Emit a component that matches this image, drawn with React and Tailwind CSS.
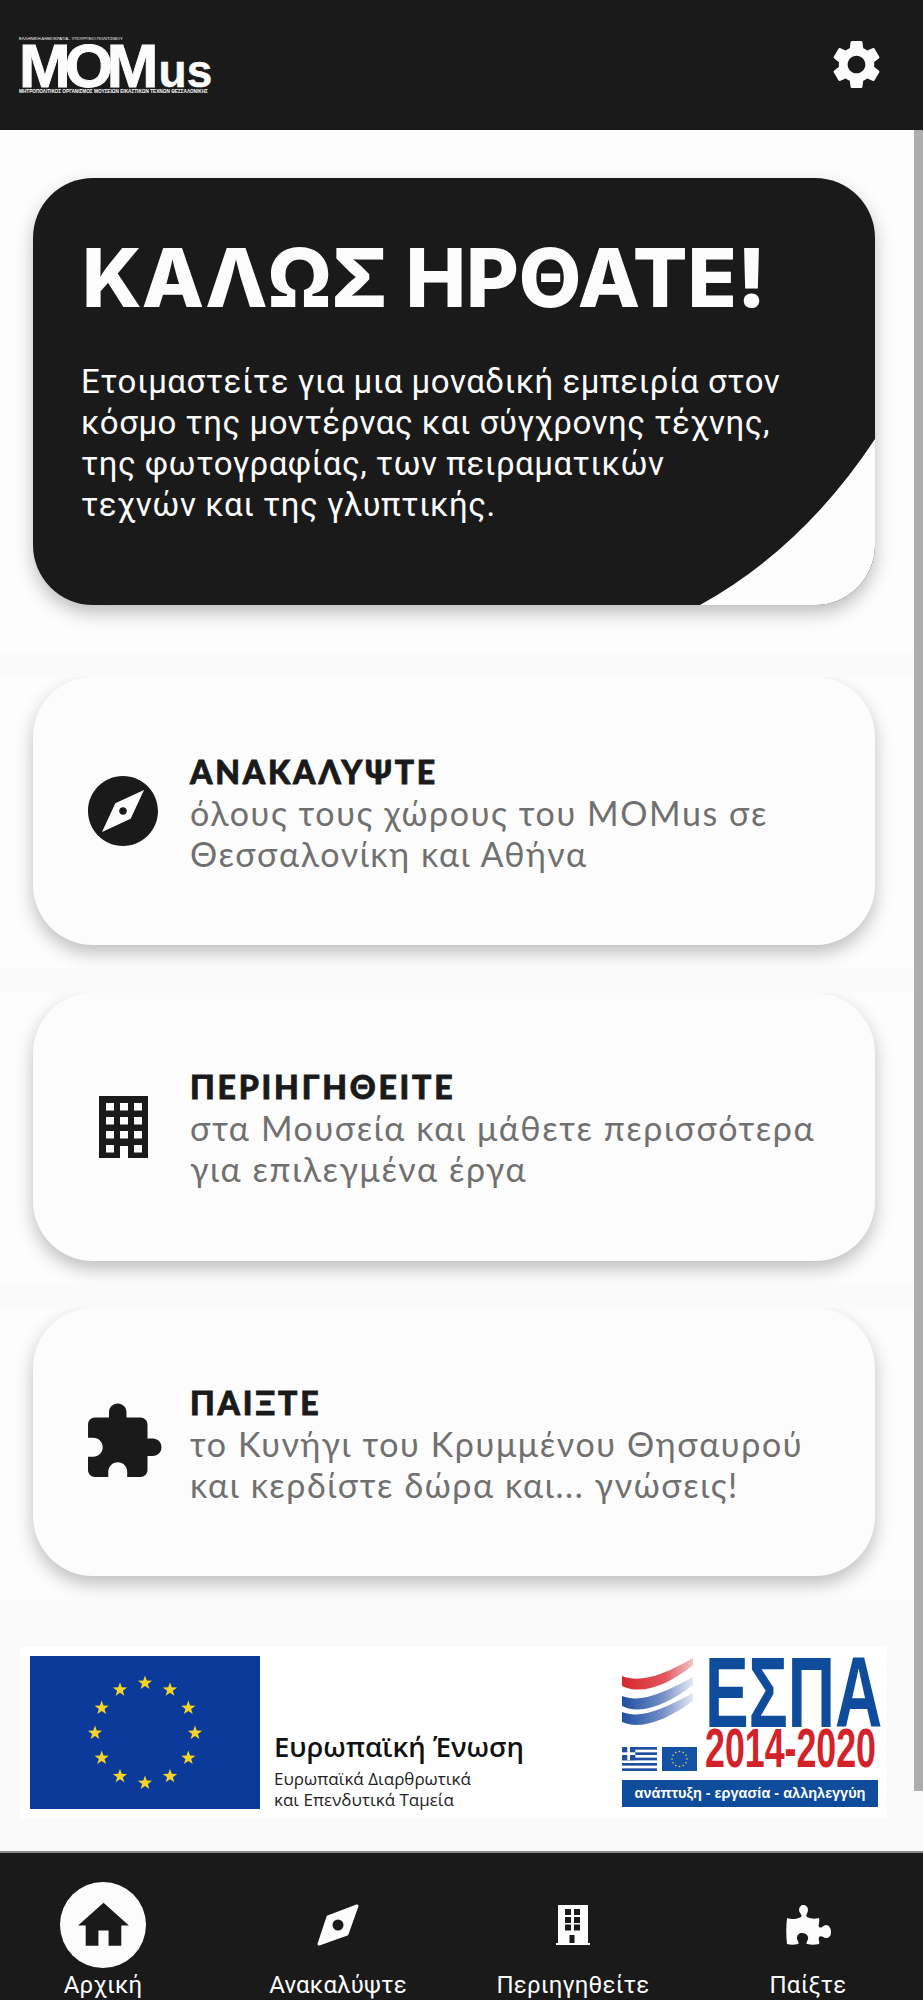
const GEAR = 'M19.14 12.94c.04-.3.06-.61.06-.94 0-.32-.02-.64-.07-.94l2.03-1.58c.18-.14.23-.41.12-.61l-1.92-3.32c-.12-.22-.37-.29-.59-.22l-2.39.96c-.5-.38-1.03-.7-1.62-.94l-.36-2.54c-.04-.24-.24-.41-.48-.41h-3.84c-.24 0-.43.17-.47.41l-.36 2.54c-.59.24-1.13.57-1.62.94l-2.39-.96c-.22-.08-.47 0-.59.22L2.74 8.87c-.12.21-.08.47.12.61l2.03 1.58c-.05.3-.09.63-.09.94s.02.64.07.94l-2.03 1.58c-.18.14-.23.41-.12.61l1.92 3.32c.12.22.37.29.59.22l2.39-.96c.5.38 1.03.7 1.62.94l.36 2.54c.05.24.24.41.48.41h3.84c.24 0 .44-.17.47-.41l.36-2.54c.59-.24 1.13-.56 1.62-.94l2.39.96c.22.08.47 0 .59-.22l1.92-3.32c.12-.22.07-.47-.12-.61l-2.01-1.58zM12 15.6c-1.98 0-3.6-1.62-3.6-3.6s1.62-3.6 3.6-3.6 3.6 1.62 3.6 3.6-1.62 3.6-3.6 3.6z';
const EXPLORE = 'M12 10.9c-.61 0-1.1.49-1.1 1.1s.49 1.1 1.1 1.1c.61 0 1.1-.49 1.1-1.1s-.49-1.1-1.1-1.1zM12 2C6.48 2 2 6.48 2 12s4.48 10 10 10 10-4.48 10-10S17.52 2 12 2zm2.19 12.19L6 18l3.81-8.19L18 6l-3.81 8.19z';
const EXTENSION = 'M20.5 11H19V7c0-1.1-.9-2-2-2h-4V3.5C13 2.12 11.88 1 10.5 1S8 2.12 8 3.5V5H4c-1.1 0-1.99.9-1.99 2v3.8H3.5c1.49 0 2.7 1.21 2.7 2.7s-1.21 2.7-2.7 2.7H2V20c0 1.1.9 2 2 2h3.8v-1.5c0-1.49 1.21-2.7 2.7-2.7 1.49 0 2.7 1.21 2.7 2.7V22H17c1.1 0 2-.9 2-2v-4h1.5c1.38 0 2.5-1.12 2.5-2.5S21.88 11 20.5 11z';
const HOME = 'M10 20v-6h4v6h5v-8h3L12 3 2 12h3v8z';

const MatIcon = ({ d, className }) => (
  <svg viewBox="0 0 24 24" className={className} fill="currentColor"><path d={d} /></svg>
);

const BuildingIcon = () => (
  <svg viewBox="0 0 49 62" className="w-[49px] h-[62px]">
    <path
      fillRule="evenodd"
      fill="#1a1a1a"
      d="M0 0h49v62H29V50h-8v12H0z
         M7 7v7.5h8V7z M21 7v7.5h8V7z M35 7v7.5h8V7z
         M7 21v7.5h8V21z M21 21v7.5h8V21z M35 21v7.5h8V21z
         M7 35v7.5h8V35z M21 35v7.5h8V35z M35 35v7.5h8V35z
         M7 49v7.5h8V49z M35 49v7.5h8V49z"
    />
  </svg>
);

const NavCompass = () => (
  <svg viewBox="0 0 44 44" className="w-[44px] h-[44px]">
    <path d="M41 3 L12 14 L3 41 L31 31 Z" fill="#fcfcfc" stroke="#fcfcfc" strokeWidth="3" strokeLinejoin="round" />
    <circle cx="22" cy="22" r="5.5" fill="#1a1a1a" />
  </svg>
);

const NavBuilding = () => (
  <svg viewBox="0 0 34 40" className="w-[34px] h-[40px]">
    <path
      fillRule="evenodd"
      fill="#fcfcfc"
      d="M2 0h30v38h2v2H0v-2h2z
         M9 4v6h6V4z M18 4v6h6V4z
         M9 12v6h6v-6z M18 12v6h6v-6z
         M9 19.500v6h6v-6z M18 19.500v6h6v-6z
         M13.500 30v8h5v-8z"
    />
  </svg>
);

const NavPuzzle = () => (
  <svg viewBox="0 0 45 40" className="w-[45px] h-[40px]">
    <path
      fill="#fcfcfc"
      d="M1 13 C6 15 11 14 15 12 C17 10 13 8 13 5 C13 2 15 0 17 0 C20 0 22 2 22 5 C22 8 19 10 21 12 C25 14 29 14 33 13 C34 17 32 20 33 22 C36 24 37 20 40 20 C43 20 45 23 45 27 C45 31 43 33 40 33 C37 33 36 30 33 32 C32 35 34 37 33 39 C29 40 25 40 21 39 C19 38 23 35 22 32 C21 29 19 28 16 28 C13 28 11 30 11 33 C11 36 14 38 12 39 C8 40 4 40 1 39 C0 31 0 21 1 13 Z"
    />
  </svg>
);

const Star = ({ cx, cy, r = 7.5 }) => {
  const points = [];
  for (let i = 0; i < 10; i++) {
    const rad = i % 2 === 0 ? r : r * 0.4;
    const a = -Math.PI / 2 + (i * Math.PI) / 5;
    points.push(`${cx + rad * Math.cos(a)},${cy + rad * Math.sin(a)}`);
  }
  return <polygon points={points.join(' ')} fill="#f5d327" />;
};

const EuFlag = () => (
  <svg viewBox="0 0 230 153" className="w-[230px] h-[153px] shrink-0">
    <rect width="230" height="153" fill="#0b3a9b" />
    {Array.from({ length: 12 }).map((_, i) => {
      const a = (i * Math.PI) / 6;
      return <Star key={i} cx={115 + 50 * Math.sin(a)} cy={77 - 50 * Math.cos(a)} />;
    })}
  </svg>
);

const EspaWaves = () => (
  <svg viewBox="0 0 71 68" className="w-[71px] h-[68px] shrink-0">
    <defs>
      <linearGradient id="waveRed" x1="0" x2="1" y1="0" y2="0">
        <stop offset="0" stopColor="#d5282f" />
        <stop offset="0.6" stopColor="#e2555a" />
        <stop offset="1" stopColor="#f2c4c4" />
      </linearGradient>
      <linearGradient id="waveBlue" x1="0" x2="1" y1="0" y2="0">
        <stop offset="0" stopColor="#1f4f9f" />
        <stop offset="0.55" stopColor="#6f8cc4" />
        <stop offset="1" stopColor="#e6e9f4" />
      </linearGradient>
    </defs>
    <path d="M0 18 C18 25 40 18 71 0 L71 7 C48 26 20 38 0 28 Z" fill="url(#waveRed)" />
    <path d="M0 38 C18 45 40 36 71 19 L71 27 C48 45 20 58 0 48 Z" fill="url(#waveBlue)" />
    <path d="M0 54 C18 61 40 52 71 35 L71 43 C48 60 20 73 0 64 Z" fill="url(#waveBlue)" />
  </svg>
);

const GreekFlag = () => (
  <svg viewBox="0 0 35 24" className="w-[35px] h-[24px] shrink-0">
    <rect width="35" height="24" fill="#fff" />
    {[0, 2, 4, 6, 8].map((i) => (
      <rect key={i} y={(i * 24) / 9} width="35" height={24 / 9} fill="#1f4f9f" />
    ))}
    <rect width="13.300" height="13.300" fill="#1f4f9f" />
    <rect x="5.300" width="2.700" height="13.300" fill="#fff" />
    <rect y="5.300" width="13.300" height="2.700" fill="#fff" />
  </svg>
);

const SmallEuFlag = () => (
  <svg viewBox="0 0 35 24" className="w-[35px] h-[24px] shrink-0">
    <rect width="35" height="24" fill="#1450a3" />
    {Array.from({ length: 12 }).map((_, i) => {
      const a = (i * Math.PI) / 6;
      return <circle key={i} cx={17.5 + 7.5 * Math.sin(a)} cy={12 - 7.5 * Math.cos(a)} r="0.8" fill="#e8d84a" />;
    })}
  </svg>
);

const Logo = () => (
  <div className="flex flex-col font-['Liberation_Sans',sans-serif] text-[#fcfcfc] w-[192px]">
    <div className="text-[4.200px] leading-[6px] whitespace-nowrap">ΕΛΛΗΝΙΚΗ ΔΗΜΟΚΡΑΤΙΑ - ΥΠΟΥΡΓΕΙΟ ΠΟΛΙΤΙΣΜΟΥ</div>
    <div className="flex items-baseline h-[43px] leading-[43px] mt-[2px] font-bold">
      <span className="text-[62px] tracking-[-6px] [-webkit-text-stroke:1px_#fcfcfc]">MOM</span>
      <span className="text-[46px] ml-[6px] [-webkit-text-stroke:0.5px_#fcfcfc]">us</span>
    </div>
    <div className="text-[4.700px] leading-[6px] mt-[2px] whitespace-nowrap font-bold">ΜΗΤΡΟΠΟΛΙΤΙΚΟΣ ΟΡΓΑΝΙΣΜΟΣ ΜΟΥΣΕΙΩΝ ΕΙΚΑΣΤΙΚΩΝ ΤΕΧΝΩΝ ΘΕΣΣΑΛΟΝΙΚΗΣ</div>
  </div>
);

const cards = [
  {
    title: 'ΑΝΑΚΑΛΥΨΤΕ',
    lines: ['όλους τους χώρους του MOMus σε', 'Θεσσαλονίκη και Αθήνα'],
    icon: <MatIcon d={EXPLORE} className="w-[84px] h-[84px] text-[#1a1a1a]" />,
  },
  {
    title: 'ΠΕΡΙΗΓΗΘΕΙΤΕ',
    lines: ['στα Μουσεία και μάθετε περισσότερα', 'για επιλεγμένα έργα'],
    icon: <BuildingIcon />,
  },
  {
    title: 'ΠΑΙΞΤΕ',
    lines: ['το Κυνήγι του Κρυμμένου Θησαυρού', 'και κερδίστε δώρα και... γνώσεις!'],
    icon: <MatIcon d={EXTENSION} className="w-[84px] h-[84px] text-[#1a1a1a]" />,
  },
];

const navItems = [
  { label: 'Αρχική', active: true },
  { label: 'Ανακαλύψτε', icon: <NavCompass /> },
  { label: 'Περιηγηθείτε', icon: <NavBuilding /> },
  { label: 'Παίξτε', icon: <NavPuzzle /> },
];

export default function App() {
  return (
    <div className="relative h-[2000px] flex flex-col overflow-hidden bg-[#fafafa] font-['Roboto',sans-serif]">
      <header className="h-[130px] shrink-0 bg-[#1a1a1a] flex items-center justify-between pl-[19px] pr-[37px]">
        <Logo />
        <MatIcon d={GEAR} className="w-[59px] h-[59px] text-[#fcfcfc] -mt-[2px]" />
      </header>

      <main className="flex-1 flex flex-col">
        <section className="pt-[48px] pb-[48px] pl-[33px] pr-[48px] overflow-hidden bg-[#fdfdfd] mb-[24px]">
          <div className="relative h-[427px] rounded-[60px] bg-[#1a1a1a] overflow-hidden shadow-[0_8px_18px_rgba(0,0,0,0.25)] pt-[52px] pl-[49px]">
            <svg viewBox="0 0 842 427" className="absolute inset-0 w-full h-full">
              <path d="M842 261 Q770 370 667 427 L842 427 Z" fill="#fdfdfd" />
            </svg>
            <h1 className="relative font-['Inter',sans-serif] text-[81px] leading-[96px] font-extrabold text-[#fcfcfc] whitespace-nowrap">ΚΑΛΩΣ ΗΡΘΑΤΕ!</h1>
            <p className="relative mt-[35px] -ml-[1px] text-[33px] leading-[41px] tracking-[0.5px] text-[#fcfcfc]">
              Ετοιμαστείτε για μια μοναδική εμπειρία στον<br />
              κόσμο της μοντέρνας και σύγχρονης τέχνης,<br />
              της φωτογραφίας, των πειραματικών<br />
              τεχνών και της γλυπτικής.
            </p>
          </div>
        </section>

        <div className="flex flex-col gap-[24.500px]">
          {cards.map((card) => (
            <section key={card.title} className="pb-[23px] pl-[33px] pr-[48px] overflow-hidden bg-[#fdfdfd]">
              <div className="h-[268px] rounded-[60px] bg-[#fcfcfc] shadow-[0_8px_18px_rgba(0,0,0,0.25)] flex items-center">
                <div className="w-[157px] shrink-0 flex justify-center pl-[23px]">{card.icon}</div>
                <div className="flex flex-col font-['Lato',sans-serif] mt-[3px]">
                  <h2 className="text-[32px] leading-[40px] font-black tracking-[2.800px] [-webkit-text-stroke:0.8px_#1a1a1a] text-[#1a1a1a]">{card.title}</h2>
                  {card.lines.map((line) => (
                    <p key={line} className="text-[34px] leading-[41px] tracking-[1.600px] text-[#707070] whitespace-nowrap">{line}</p>
                  ))}
                </div>
              </div>
            </section>
          ))}
        </div>

        <section className="mt-[48px] ml-[20px] w-[867px] h-[171px] bg-white flex items-center pl-[10px]">
          <EuFlag />
          <div className="w-[362px] shrink-0 pl-[14px] self-end pb-[8px] font-['Open_Sans',sans-serif] text-[#222]">
            <div className="text-[27.500px] leading-[36px] font-semibold text-[#111] whitespace-nowrap">Ευρωπαϊκή Ένωση</div>
            <div className="text-[17px] leading-[21px] mt-[3px] whitespace-nowrap">Ευρωπαϊκά Διαρθρωτικά<br />και Επενδυτικά Ταμεία</div>
          </div>
          <div className="flex flex-col w-[256px] shrink-0 font-['Liberation_Sans',sans-serif] font-bold">
            <div className="flex gap-[12px] h-[68px]">
              <EspaWaves />
              <div className="origin-top-left scale-x-[0.654] text-[100px] leading-[68px] text-[#0f4c9c] whitespace-nowrap">ΕΣΠΑ</div>
            </div>
            <div className="flex items-end gap-[5px] h-[45px]">
              <GreekFlag />
              <SmallEuFlag />
              <div className="origin-bottom-left scale-x-[0.65] ml-[3px] text-[55px] leading-[45px] text-[#d2232a] whitespace-nowrap">2014-2020</div>
            </div>
            <div className="mt-[9px] h-[27px] bg-[#0f4c9c] text-white text-[14.500px] leading-[27px] text-center whitespace-nowrap">ανάπτυξη - εργασία - αλληλεγγύη</div>
          </div>
        </section>
      </main>

      <nav className="h-[149px] shrink-0 border-t-2 border-[#8a8a8a] bg-[#1a1a1a] flex justify-between pl-[23px] pr-[35px] pt-[29px] text-[#fcfcfc]">
        {navItems.map((item) => (
          <div key={item.label} className="w-[160px] flex flex-col items-center">
            <div className="h-[86px] w-[86px] flex items-center justify-center">
              {item.active ? (
                <div className="w-[86px] h-[86px] rounded-full bg-[#fcfcfc] flex items-center justify-center">
                  <MatIcon d={HOME} className="w-[61px] h-[61px] text-[#1a1a1a]" />
                </div>
              ) : item.icon}
            </div>
            <div className="mt-[3px] text-[24px] leading-[28px] tracking-[0.2px] whitespace-nowrap">{item.label}</div>
          </div>
        ))}
      </nav>

      {/* scrollbar, sits over the page */}
      <div className="absolute right-0 top-[130px] w-[9px] h-[1661px] bg-[#adadad]" />
    </div>
  );
}
